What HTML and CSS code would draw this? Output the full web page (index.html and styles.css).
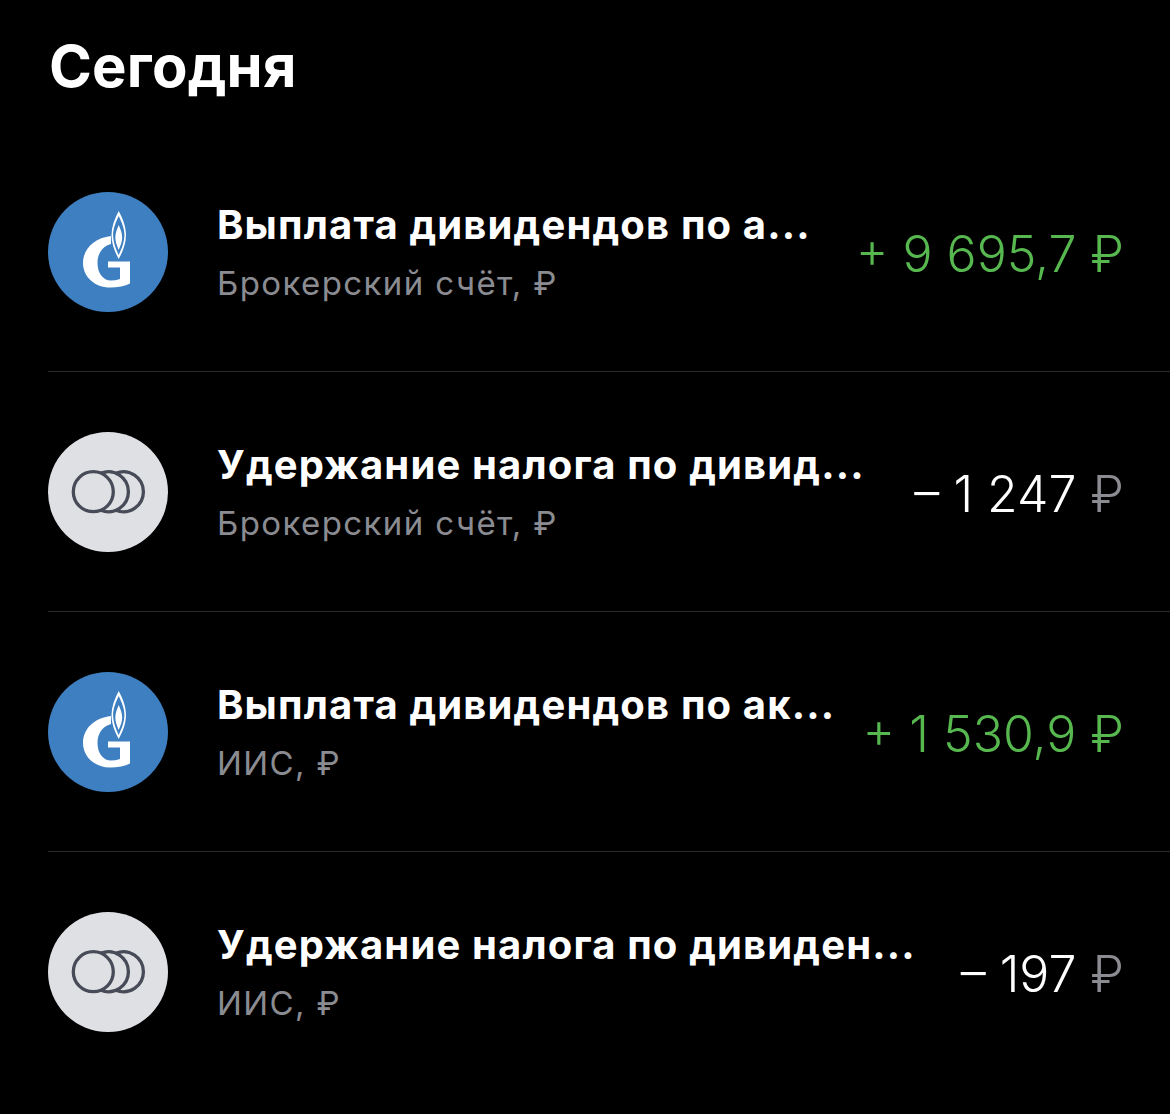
FILE: index.html
```html
<!DOCTYPE html>
<html lang="ru">
<head>
<meta charset="utf-8">
<title>Сегодня</title>
<link rel="stylesheet" href="styles.css">
</head>
<body>
<svg class="defs" width="0" height="0" aria-hidden="true">
  <symbol id="gaz" viewBox="0 0 120 120">
    <circle cx="60" cy="60" r="60" fill="#3d7fc1"/>
    <path fill="#fff" fill-rule="evenodd" d="M70.700 19C66.500 27 63.500 35 63.500 43C63.500 52 67 60 70.700 67C74.500 60 78 52 78 43C78 35 75 27 70.700 19ZM70.700 24C73.500 30 76.400 36 76.400 43C76.400 50 73.500 57 70.700 63C68 57 65.100 50 65.100 43C65.100 36 68 30 70.700 24Z"/>
    <path fill="#fff" d="M70.700 33C72.300 37 74.200 41 74.200 45.500C74.200 50 72.300 54 70.700 58C69.200 54 67.300 50 67.300 45.500C67.300 41 69.200 37 70.700 33Z"/>
    <path fill="#fff" d="M63 44C46 46 35 57 35 71C35 85 47 95.500 62 95.500C70 95.500 77 94 82 91.500V69.500H60V75.500H72V87C69 88 66 88.500 63 88.500C55 88.500 49.500 81 49.500 71C49.500 62 54 54.500 63 52Z"/>
  </symbol>
  <symbol id="coins" viewBox="0 0 120 120">
    <circle cx="60" cy="60" r="60" fill="#dfe0e3"/>
    <g fill="none" stroke="#474b57" stroke-width="3.300">
      <circle cx="45.300" cy="59.700" r="20"/>
      <path d="M52.800 41.200A20 20 0 1 1 52.800 78.200"/>
      <path d="M67.800 41.200A20 20 0 1 1 67.800 78.200"/>
    </g>
  </symbol>
</svg>
<main class="screen">
  <h1 class="heading">Сегодня</h1>
  <ul class="list">
    <li class="row">
      <svg class="avatar"><use href="#gaz"/></svg>
      <div class="info"><div class="title">Выплата дивидендов по а...</div><div class="sub">Брокерский счёт, ₽</div></div>
      <div class="amount plus">+ 9 695,7 <span>₽</span></div>
    </li>
    <li class="row">
      <svg class="avatar"><use href="#coins"/></svg>
      <div class="info"><div class="title">Удержание налога по дивид...</div><div class="sub">Брокерский счёт, ₽</div></div>
      <div class="amount">– 1 247 <span class="cur">₽</span></div>
    </li>
    <li class="row">
      <svg class="avatar"><use href="#gaz"/></svg>
      <div class="info"><div class="title">Выплата дивидендов по ак...</div><div class="sub">ИИС, ₽</div></div>
      <div class="amount plus">+ 1 530,9 <span>₽</span></div>
    </li>
    <li class="row">
      <svg class="avatar"><use href="#coins"/></svg>
      <div class="info"><div class="title">Удержание налога по дивиден...</div><div class="sub">ИИС, ₽</div></div>
      <div class="amount">– 197 <span class="cur">₽</span></div>
    </li>
  </ul>
</main>
</body>
</html>
```
FILE: styles.css
```css
* { box-sizing: border-box; }
html, body { margin: 0; height: 100%; background: #000; }
body { font-family: Inter, "Liberation Sans", sans-serif; color: #fff; overflow: hidden; }
.defs { display: block; height: 0; }
.screen { padding-top: 31px; }
.heading { margin: 0 0 0 49px; height: 101px; font-size: 58px; line-height: 70px; font-weight: 700; letter-spacing: 0.200px; }
.list { list-style: none; margin: 0; padding: 0 0 0 48px; }
.row { display: flex; align-items: center; height: 240px; padding-right: 46px; border-bottom: 1px solid #2a2a2c; }
.row:last-child { border-bottom: 0; }
.avatar { flex: none; width: 120px; height: 120px; margin-right: 49px; }
.info { flex: 1; min-width: 0; }
.title { font-size: 40px; line-height: 46px; font-weight: 650; letter-spacing: 1.150px; white-space: nowrap; margin-top: 1px; }
.sub { font-size: 33px; line-height: 40px; margin-top: 15px; color: #8b8c92; letter-spacing: 1.400px; white-space: nowrap; }
.amount { font-size: 50px; line-height: 56px; font-weight: 340; white-space: nowrap; margin-top: 4px; }
.plus { color: #57b84f; }
.cur { color: #8b8c92; }
```
